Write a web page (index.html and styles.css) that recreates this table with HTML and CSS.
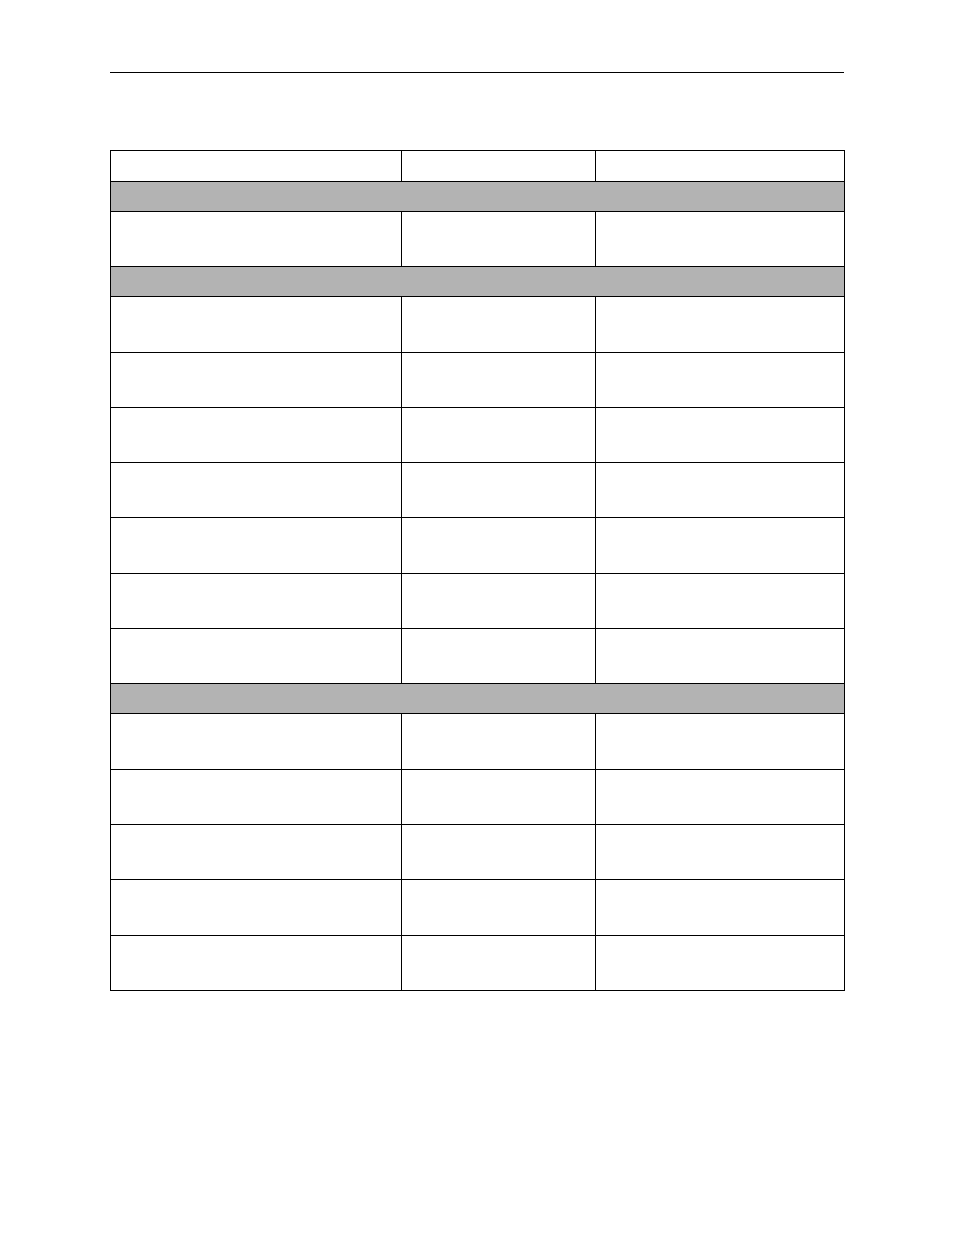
FILE: index.html
```html
<!DOCTYPE html>
<html>
<head>
<meta charset="utf-8">
<link rel="stylesheet" href="styles.css">
</head>
<body>
<div class="page">
  <div class="rule"></div>
  <table class="grid">
    <colgroup>
      <col class="c1"><col class="c2"><col class="c3">
    </colgroup>
    <tr class="head"><td></td><td></td><td></td></tr>
    <tr class="section"><td colspan="3"></td></tr>
    <tr class="row"><td></td><td></td><td></td></tr>
    <tr class="section"><td colspan="3"></td></tr>
    <tr class="row"><td></td><td></td><td></td></tr>
    <tr class="row"><td></td><td></td><td></td></tr>
    <tr class="row"><td></td><td></td><td></td></tr>
    <tr class="row"><td></td><td></td><td></td></tr>
    <tr class="row"><td></td><td></td><td></td></tr>
    <tr class="row"><td></td><td></td><td></td></tr>
    <tr class="row"><td></td><td></td><td></td></tr>
    <tr class="section"><td colspan="3"></td></tr>
    <tr class="row"><td></td><td></td><td></td></tr>
    <tr class="row"><td></td><td></td><td></td></tr>
    <tr class="row"><td></td><td></td><td></td></tr>
    <tr class="row"><td></td><td></td><td></td></tr>
    <tr class="row"><td></td><td></td><td></td></tr>
  </table>
</div>
</body>
</html>
```

FILE: styles.css
```css
html, body {
  margin: 0;
  padding: 0;
  background: #ffffff;
  font-family: "Liberation Sans", Arial, sans-serif;
}
.page {
  padding: 72px 0 0 110px;
  width: 734px;
}
.rule {
  height: 0;
  border-top: 1px solid #000;
  width: 734px;
}
.grid {
  margin-top: 77px;
  width: 734px;
  table-layout: fixed;
  border-collapse: collapse;
  border: 1px solid #000;
}
.c1 { width: 291px; }
.c2 { width: 194px; }
.c3 { width: 249px; }
.grid td {
  border: 1px solid #000;
  padding: 0;
}
.head td { height: 30px; }
.section td { height: 29px; background: #b3b3b3; }
.row td { height: 54.3px; }
```
